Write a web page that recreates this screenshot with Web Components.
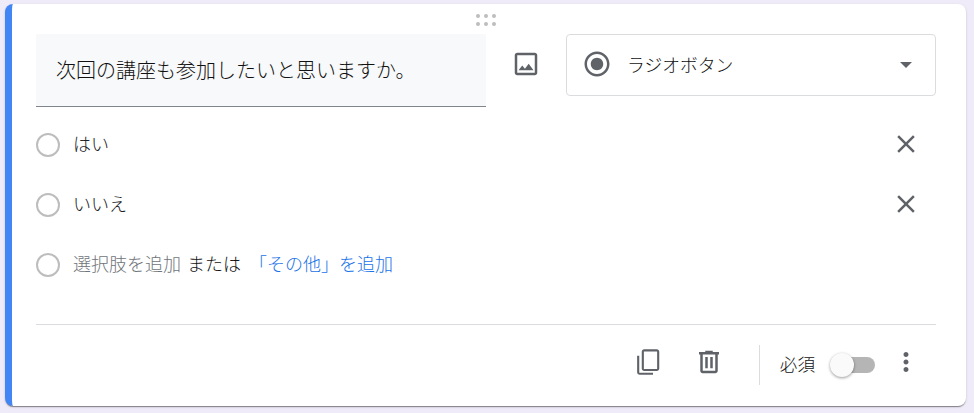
<!DOCTYPE html>
<html lang="ja">
<head>
<meta charset="utf-8">
<style>
    html, body { margin: 0; height: 100%; }
    body {
        background: #f0ebf8;
        font-family: "Noto Sans CJK JP", "Liberation Sans", sans-serif;
        font-weight: 300;
        color: #111;
        overflow: hidden;
    }
</style>
</head>
<body>
<question-card>
    <drag-handle slot="handle"></drag-handle>
    <question-title slot="title">次回の講座も参加したいと思いますか。</question-title>
    <icon-button slot="image" icon="image"></icon-button>
    <type-select slot="type">ラジオボタン</type-select>

    <radio-option>はい<icon-button slot="end" icon="close"></icon-button></radio-option>
    <radio-option>いいえ<icon-button slot="end" icon="close"></icon-button></radio-option>
    <radio-option><add-option></add-option></radio-option>

    <card-footer slot="footer"></card-footer>
</question-card>

<script>
const ICONS = {
    image: 'M19 5v14H5V5h14m0-2H5c-1.1 0-2 .9-2 2v14c0 1.1.9 2 2 2h14c1.1 0 2-.9 2-2V5c0-1.1-.9-2-2-2zm-4.86 8.86l-3 3.87L9 13.14 6 17h12l-3.86-5.14z',
    close: 'M19 6.41L17.59 5 12 10.59 6.41 5 5 6.41 10.59 12 5 17.59 6.41 19 12 13.41 17.59 19 19 17.59 13.41 12z',
    radio: 'M12 7c-2.76 0-5 2.24-5 5s2.24 5 5 5 5-2.24 5-5-2.24-5-5-5zm0-5C6.48 2 2 6.48 2 12s4.48 10 10 10 10-4.48 10-10S17.52 2 12 2zm0 18c-4.42 0-8-3.58-8-8s3.58-8 8-8 8 3.58 8 8-3.58 8-8 8z',
    copy: 'M5 7H3.3v13.2c0 1.1.9 2 2 2H16v-1.7H5zM19 1.8H9c-1.1 0-2 .9-2 2v13.4c0 1.1.9 2 2 2h10c1.1 0 2-.9 2-2V3.800c0-1.100-.9-2-2-2zm.3 15.7H8.700V3.500h10.600z',
    trash: 'M15 4V3H9v1H4v2h1v13c0 1.1.9 2 2 2h10c1.1 0 2-.9 2-2V6h1V4h-5zm2 15H7V6h10v13zM9 8h2v9H9zm4 0h2v9h-2z',
    more: 'M12 8c1.1 0 2-.9 2-2s-.9-2-2-2-2 .9-2 2 .9 2 2 2zm0 2c-1.100 0-2 .9-2 2s.9 2 2 2 2-.9 2-2-.9-2-2-2zm0 6c-1.100 0-2 .9-2 2s.9 2 2 2 2-.9 2-2-.9-2-2-2z'
};

class IconButton extends HTMLElement {
    constructor() {
        super();
        this.attachShadow({ mode: 'open' });
    }
    connectedCallback() {
        this.shadowRoot.innerHTML = `
            <style>
                :host { display: inline-flex; width: 30px; height: 30px; align-items: center; justify-content: center; flex: none; }
                svg { display: block; fill: #5f6368; flex: none; }
            </style>
            <svg width="30" height="30" viewBox="0 0 24 24"><path d="${ICONS[this.getAttribute('icon')]}"/></svg>`;
    }
}
customElements.define('icon-button', IconButton);

const cardTemplate = document.createElement('template');
cardTemplate.innerHTML = `
    <style>
        :host {
            display: block;
            box-sizing: border-box;
            width: 961px;
            height: 402px;
            margin: 4px 0 0 5px;
            padding: 0 30px 0 24px;
            background: #fff;
            border-left: 7px solid #4285f4;
            border-radius: 8px;
            box-shadow: 0 1px 1px rgba(0,0,0,.14), 0 2px 1px -1px rgba(0,0,0,.3), 0 1px 3px rgba(0,0,0,.12);
        }
        .handle { display: flex; justify-content: center; height: 30px; padding-top: 10px; box-sizing: border-box; }
        .head { display: flex; align-items: flex-start; height: 80px; }
        .title-side { flex: none; width: 450px; }
        .image-side { flex: none; width: 80px; height: 60px; display: flex; align-items: center; justify-content: center; }
        .type-side { flex: 1; }
        .options { display: flex; flex-direction: column; }
        .line { height: 1px; background: #dadce0; margin-top: 30px; }
    </style>
    <div class="handle"><slot name="handle"></slot></div>
    <div class="head">
        <div class="title-side"><slot name="title"></slot></div>
        <div class="image-side"><slot name="image"></slot></div>
        <div class="type-side"><slot name="type"></slot></div>
    </div>
    <div class="options"><slot></slot></div>
    <div class="line"></div>
    <slot name="footer"></slot>
`;
class QuestionCard extends HTMLElement {
    constructor() {
        super();
        this.attachShadow({ mode: 'open' }).appendChild(cardTemplate.content.cloneNode(true));
    }
}
customElements.define('question-card', QuestionCard);

class DragHandle extends HTMLElement {
    constructor() {
        super();
        this.attachShadow({ mode: 'open' }).innerHTML = `
            <style>
                :host { display: grid; grid-template-columns: repeat(3, 4px); grid-auto-rows: 4px; gap: 4px 4px; width: 20px; height: 12px; }
                i { background: #bdbdbd; border-radius: 50%; }
            </style>
            <i></i><i></i><i></i><i></i><i></i><i></i>`;
    }
}
customElements.define('drag-handle', DragHandle);

class QuestionTitle extends HTMLElement {
    constructor() {
        super();
        this.attachShadow({ mode: 'open' }).innerHTML = `
            <style>
                :host {
                    display: flex;
                    align-items: center;
                    box-sizing: border-box;
                    height: 73px;
                    padding: 0 20px 2px;
                    background: #f8f9fa;
                    border-bottom: 1px solid #80868b;
                    font-size: 20px;
                    white-space: nowrap;
                }
            </style>
            <slot></slot>`;
    }
}
customElements.define('question-title', QuestionTitle);

class TypeSelect extends HTMLElement {
    constructor() {
        super();
        this.attachShadow({ mode: 'open' }).innerHTML = `
            <style>
                :host {
                    display: flex;
                    align-items: center;
                    box-sizing: border-box;
                    height: 62px;
                    padding: 0 23px 2px 15px;
                    border: 1px solid #dadce0;
                    border-radius: 4px;
                    font-size: 17.8px;
                    white-space: nowrap;
                }
                .label { flex: 1; margin-left: 15px; }
                .arrow { width: 0; height: 0; margin-top: 2px; border: 6px solid transparent; border-top-color: #5f6368; border-bottom: 0; }
            </style>
            <icon-button icon="radio"></icon-button>
            <span class="label"><slot></slot></span>
            <span class="arrow"></span>`;
    }
}
customElements.define('type-select', TypeSelect);

class RadioOption extends HTMLElement {
    constructor() {
        super();
        this.attachShadow({ mode: 'open' }).innerHTML = `
            <style>
                :host { display: flex; align-items: center; height: 60px; font-size: 18px; color: #202124; }
                .dot { flex: none; box-sizing: border-box; width: 24px; height: 24px; margin: 2px 13px 0 0; border: 2.4px solid #bdbdbd; border-radius: 50%; }
                .text { flex: 1; white-space: nowrap; padding-bottom: 2px; }
                .end { display: flex; margin-right: 15px; }
            </style>
            <span class="dot"></span>
            <span class="text"><slot></slot></span>
            <span class="end"><slot name="end"></slot></span>`;
    }
}
customElements.define('radio-option', RadioOption);

class AddOption extends HTMLElement {
    constructor() {
        super();
        this.attachShadow({ mode: 'open' }).innerHTML = `
            <style>
                :host { display: flex; align-items: center; gap: 6px; }
                .add { color: #70757a; }
                .or { color: #111; }
                .other { color: #1a73e8; margin-left: 2px; }
            </style>
            <span class="add">選択肢を追加</span>
            <span class="or">または</span>
            <span class="other">「その他」を追加</span>`;
    }
}
customElements.define('add-option', AddOption);

class CardFooter extends HTMLElement {
    constructor() {
        super();
        this.attachShadow({ mode: 'open' }).innerHTML = `
            <style>
                :host { display: flex; align-items: center; justify-content: flex-end; height: 74px; box-sizing: border-box; }
                .group { display: flex; gap: 31px; }
                .sep { width: 1px; height: 40px; background: #dadce0; margin: 6px 20px 0 35px; }
                .label { font-size: 17.6px; color: #111; margin-right: 15px; padding-top: 2px; }
                form-toggle { margin-top: 6px; }
                .more { margin: 0 15px 0 16px; }
            </style>
            <div class="group">
                <icon-button icon="copy"></icon-button>
                <icon-button icon="trash"></icon-button>
            </div>
            <div class="sep"></div>
            <span class="label">必須</span>
            <form-toggle></form-toggle>
            <icon-button class="more" icon="more"></icon-button>`;
    }
}
customElements.define('card-footer', CardFooter);

class FormToggle extends HTMLElement {
    constructor() {
        super();
        this.attachShadow({ mode: 'open' }).innerHTML = `
            <style>
                :host { display: flex; align-items: center; width: 45px; height: 24px; }
                .track { flex: 1; height: 16px; margin-left: 4px; border-radius: 8px; background: #b5b5b5; display: flex; align-items: center; }
                .thumb { width: 24px; height: 24px; margin-left: -4px; border-radius: 50%; background: #fafafa; box-shadow: 0 1px 3px rgba(0,0,0,.4); }
            </style>
            <div class="track"><div class="thumb"></div></div>`;
    }
}
customElements.define('form-toggle', FormToggle);
</script>
</body>
</html>
